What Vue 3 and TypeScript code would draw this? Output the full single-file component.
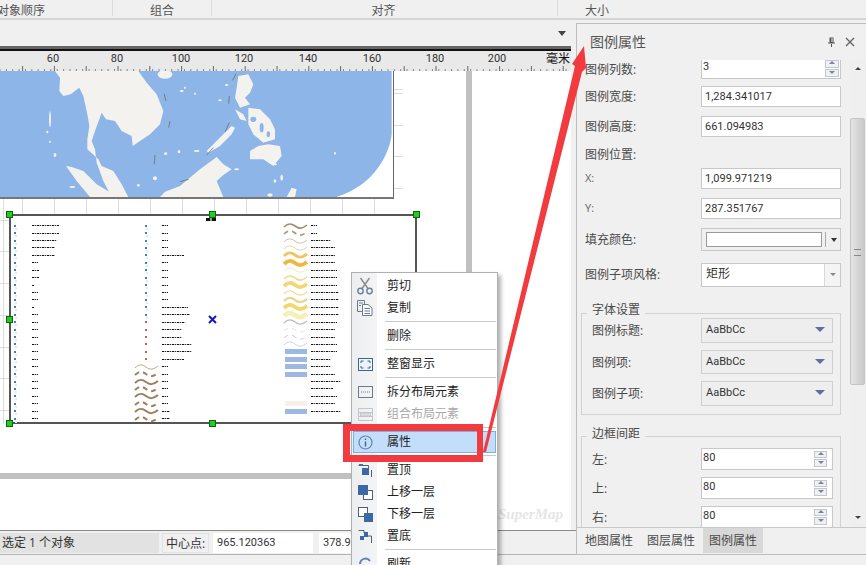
<script setup lang="ts">
type Sym = { kind: 'dot' | 'red' | 'wave' | 'dash' | 'rect' | 'none'; color?: string; w?: number };
type LegendRow = { sym: Sym; label: number };

const rulerLabels = [
  { text: '60', x: 53 },
  { text: '80', x: 117 },
  { text: '100', x: 181 },
  { text: '120', x: 244 },
  { text: '140', x: 308 },
  { text: '160', x: 372 },
  { text: '180', x: 435 },
  { text: '200', x: 497 },
];
const majorTicks = Array.from({ length: 18 }, (_, i) => 22.6 + i * 31.8);
const minorTicks = Array.from({ length: 90 }, (_, i) => i * 6.36);

const col1Widths = [27, 27, 25, 23, 23, 6, 7, 7, 2, 6, 6, 2, 6, 6, 6, 6, 6, 6, 6, 6, 6, 6, 6, 6, 6, 6, 6];
const col2Widths = [6, 6, 6, 6, 22, 6, 6, 6, 6, 6, 6, 26, 28, 23, 20, 20, 30, 30, 22, 6, 6, 6, 6, 6, 6, 8, 8];
const col3Widths = [6, 6, 20, 24, 24, 24, 26, 26, 26, 28, 28, 28, 28, 26, 24, 24, 26, 26, 20, 20, 24, 30, 22, 26, 24, 30];

const col3Syms: Sym[] = [
  { kind: 'wave', color: '#a08a6a', w: 1.6 },
  { kind: 'dash', color: '#a8977f', w: 1.6 },
  { kind: 'wave', color: '#bdb5a0', w: 0.9 },
  { kind: 'wave', color: '#e2cf9d', w: 0.9 },
  { kind: 'wave', color: '#efc564', w: 3 },
  { kind: 'wave', color: '#f0b840', w: 4 },
  { kind: 'wave', color: '#f6e7bd', w: 1 },
  { kind: 'wave', color: '#f2d98c', w: 1.6 },
  { kind: 'wave', color: '#f3d676', w: 4 },
  { kind: 'wave', color: '#efdc99', w: 1.2 },
  { kind: 'wave', color: '#edd48e', w: 2.4 },
  { kind: 'wave', color: '#f2d66e', w: 4 },
  { kind: 'wave', color: '#f5efb8', w: 5 },
  { kind: 'wave', color: '#bdbdbd', w: 1.4 },
  { kind: 'dash', color: '#e2e2e2', w: 1 },
  { kind: 'dash', color: '#cdcdcd', w: 1 },
  { kind: 'wave', color: '#c5d6e8', w: 1 },
  { kind: 'rect', color: '#9db8e2' },
  { kind: 'rect', color: '#9db8e2' },
  { kind: 'rect', color: '#9db8e2' },
  { kind: 'rect', color: '#9db8e2' },
  { kind: 'none' },
  { kind: 'none' },
  { kind: 'none' },
  { kind: 'rect', color: '#f6efea' },
  { kind: 'rect', color: '#9db8e2' },
];

const col1: LegendRow[] = col1Widths.map((label) => ({ sym: { kind: 'dot' }, label }));
const col2: LegendRow[] = col2Widths.map((label, i) => {
  if (i < 13) return { sym: { kind: 'dot' }, label };
  if (i < 19) return { sym: { kind: 'red' }, label };
  const thin = i === 19;
  return { sym: { kind: i % 2 === 0 ? 'dash' : 'wave', color: thin ? '#b9a88f' : '#9c7f5c', w: thin ? 1 : 2 }, label };
});
const col3: LegendRow[] = col3Widths.map((label, i) => ({ sym: col3Syms[i], label }));
const columns = [
  { name: 'col-a', rows: col1 },
  { name: 'col-b', rows: col2 },
  { name: 'col-c', rows: col3 },
];

const handles = [
  { x: 0, y: 0 }, { x: 203, y: 0 }, { x: 407, y: 0 },
  { x: 0, y: 105 }, { x: 407, y: 105 },
  { x: 0, y: 209 }, { x: 203, y: 209 }, { x: 407, y: 209 },
];

const islands = [
  [150, 145, 3, 24], [142, 183, 3, 4], [165, 252, 4, 6], [150, 212, 3, 3], [217, 348, 9, 3],
  [465, 322, 6, 6], [415, 343, 4, 4], [537, 242, 4, 5], [497, 248, 5, 4], [590, 240, 9, 3],
  [545, 60, 6, 3], [555, 50, 3, 3], [585, 68, 3, 3], [680, 42, 5, 3], [660, 88, 5, 3],
  [825, 280, 6, 3], [710, 295, 7, 3], [845, 320, 4, 9], [825, 330, 4, 5], [810, 372, 8, 5], [1005, 247, 3, 4],
];

const fontRows = ['图例标题:', '图例项:', '图例子项:'];
const marginRows = ['左:', '上:', '右:'];
</script>

<template>
  <div class="app">
    <header class="ribbon">
      <div class="ribbon-cell first">对象顺序</div>
      <div class="ribbon-cell second">组合</div>
      <div class="ribbon-cell third">对齐</div>
      <div class="ribbon-cell fourth">大小</div>
    </header>

    <div class="body">
      <section class="workspace">
        <div class="subbar"><span class="sub-arrow"></span></div>
        <div class="heavy-line"></div>
        <div class="ruler">
          <svg class="ruler-ticks" width="571" height="20">
            <line v-for="x in minorTicks" :key="x" :x1="x" :x2="x" y1="18" y2="20" stroke="#888" />
            <line v-for="x in majorTicks" :key="'m' + x" :x1="x" :x2="x" y1="15" y2="20" stroke="#666" />
          </svg>
          <span v-for="l in rulerLabels" :key="l.text" class="ruler-num" :style="{ left: l.x + 'px' }">{{ l.text }}</span>
          <span class="ruler-unit">毫米</span>
        </div>

        <div class="canvas">
          <div class="grid"></div>
          <div class="page-v"></div>
          <div class="page-h"></div>

          <svg class="map" viewBox="0 0 1179 378" preserveAspectRatio="none">
            <path d="M0 0H1175V190C1170 240 1130 340 1010 378H0Z" fill="#8db5e8" />
            <g fill="#f3f2ef">
              <path d="M165 0L180 20 178 60 190 75 212 70 238 50 250 75 262 130 268 165 262 205 262 235 295 265 305 285 340 300 365 340 385 378H335L310 330 290 275 285 235 275 210 285 180 305 125 318 145 345 150 365 180 395 195 398 225 420 210 450 190 480 160 490 120 470 70 440 35 415 0Z" />
              <ellipse cx="495" cy="10" rx="22" ry="13" />
              <path d="M198 285L215 288 250 300 290 340 340 370 350 378H270L230 330Z" />
              <path d="M480 378L495 362 540 345 600 295 650 258 670 280 695 295 670 312 650 330 670 378Z" />
              <path d="M620 240L670 190 695 165 705 170 695 190 660 225 625 245Z" />
              <path d="M715 15L745 10 760 40 750 65 735 80 750 100 720 110 705 80 710 50Z" />
              <path d="M705 115L730 130 740 150 720 145Z" />
              <path d="M745 110L780 115 810 145 825 175 825 205 790 215 760 190 745 160Z" />
              <path d="M805 220L840 225 845 255 820 285 790 265 750 265 750 240 775 225Z" />
              <path d="M860 378L875 350 890 355 885 378Z" />
              <ellipse v-for="(s, i) in islands" :key="i" :cx="s[0]" :cy="s[1]" :rx="s[2]" :ry="s[3]" />
            </g>
            <g fill="#8db5e8">
              <ellipse cx="760" cy="145" rx="9" ry="8" />
              <ellipse cx="785" cy="170" rx="6" ry="14" />
              <ellipse cx="805" cy="190" rx="5" ry="9" />
              <ellipse cx="770" cy="205" rx="6" ry="4" />
            </g>
            <g stroke="#6f6a6a" stroke-width="3" fill="none" opacity="0.75">
              <path d="M492 68L498 90" /><path d="M510 150L506 170" /><path d="M688 75L686 98" />
              <path d="M688 155L676 182" /><path d="M465 252L463 280" /><path d="M540 332L566 325" />
              <path d="M708 8L698 28" /><path d="M640 230L620 252" />
            </g>
          </svg>

          <div class="legend">
            <div v-for="c in columns" :key="c.name" class="legend-col" :class="c.name">
              <div v-for="(r, i) in c.rows" :key="i" class="legend-row">
                <span class="sym">
                  <i v-if="r.sym.kind === 'dot'" class="sym-dot"></i>
                  <i v-else-if="r.sym.kind === 'red'" class="sym-red"></i>
                  <i v-else-if="r.sym.kind === 'rect'" class="sym-rect" :style="{ background: r.sym.color }"></i>
                  <svg v-else-if="r.sym.kind === 'wave' || r.sym.kind === 'dash'" class="sym-wave" viewBox="0 0 23 8">
                    <path
                      d="M0 5C4 1 7 1 11 4S18 7 23 3"
                      fill="none"
                      :stroke="r.sym.color"
                      :stroke-width="r.sym.w"
                      :stroke-dasharray="r.sym.kind === 'dash' ? '5 4' : undefined"
                    />
                  </svg>
                </span>
                <span class="dash" :style="{ width: r.label + 'px' }"></span>
              </div>
            </div>
            <span class="legend-title"></span>
            <svg class="center-mark" width="9" height="9" viewBox="0 0 9 9">
              <path d="M1 1L8 8M8 1L1 8" stroke="#1616c4" stroke-width="2" />
            </svg>
            <span v-for="(h, i) in handles" :key="i" class="handle" :style="{ left: h.x + 'px', top: h.y + 'px' }"></span>
          </div>

          <span class="watermark">SuperMap</span>
        </div>

        <footer class="status">
          <span class="status-main">选定 1 个对象</span>
          <span class="status-label">中心点:</span>
          <span class="status-field wide">965.120363</span>
          <span class="status-field">378.93</span>
        </footer>
      </section>

      <aside class="panel">
        <div class="panel-head">
          <span class="panel-title">图例属性</span>
          <svg class="pin" width="9" height="10" viewBox="0 0 9 10">
            <path d="M2.5 0.5H6.5V5.5H8V6.5H1V5.5H2.5ZM4 7H5V10H4Z" fill="#555" />
            <path d="M5 1V5" stroke="#eee" />
          </svg>
          <svg class="close" width="10" height="10" viewBox="0 0 10 10">
            <path d="M1 1L9 9M9 1L1 9" stroke="#666" stroke-width="1.4" />
          </svg>
        </div>

        <div class="panel-body">
          <div class="form">
            <div class="row first-row">
              <label>图例列数:</label>
              <div class="input spin-input">3<span class="spin"><i class="up"></i><i class="down"></i></span></div>
            </div>
            <div class="row gap7"><label>图例宽度:</label><div class="input">1,284.341017</div></div>
            <div class="row"><label>图例高度:</label><div class="input">661.094983</div></div>
            <div class="row text-row"><label>图例位置:</label></div>
            <div class="row gap4"><label class="dim">X:</label><div class="input">1,099.971219</div></div>
            <div class="row"><label class="dim">Y:</label><div class="input">287.351767</div></div>
            <div class="row tall">
              <label>填充颜色:</label>
              <div class="input color-input"><span class="swatch"></span><span class="color-drop"></span></div>
            </div>
            <div class="row gap12 combo-row">
              <label>图例子项风格:</label>
              <div class="input select">矩形<span class="select-btn"></span></div>
            </div>

            <fieldset class="group">
              <legend>字体设置</legend>
              <div v-for="f in fontRows" :key="f" class="group-row font-row">
                <label>{{ f }}</label>
                <div class="font-box">AaBbCc<span class="font-arrow"></span></div>
              </div>
            </fieldset>

            <fieldset class="group margins">
              <legend>边框间距</legend>
              <div v-for="m in marginRows" :key="m" class="group-row margin-row">
                <label>{{ m }}</label>
                <div class="input spin-input narrow">80<span class="spin big"><i class="up"></i><i class="down"></i></span></div>
              </div>
            </fieldset>
          </div>

          <div class="scrollbar">
            <span class="sb-up"></span>
            <div class="sb-thumb"><span class="grip"></span></div>
            <span class="sb-down"></span>
          </div>
        </div>

        <nav class="tabs">
          <span class="tab">地图属性</span>
          <span class="tab">图层属性</span>
          <span class="tab active">图例属性</span>
        </nav>
      </aside>
    </div>

    <!-- context menu -->
    <div class="menu">
      <div class="menu-item">
        <span class="mi">
          <svg width="16" height="18" viewBox="0 0 16 18" fill="none" stroke="#6c7f96" stroke-width="1.4">
            <circle cx="3.5" cy="14" r="2.7" /><circle cx="12.5" cy="14" r="2.7" />
            <path d="M5 11.5L12.5 1M11 11.5L3.5 1" stroke="#8a8a8a" />
          </svg>
        </span>剪切
      </div>
      <div class="menu-item">
        <span class="mi">
          <svg width="16" height="16" viewBox="0 0 16 16" fill="#fff" stroke="#6b7c90">
            <path d="M0.5 0.5H7.5V11.5H0.5Z" fill="none" />
            <path d="M5.5 4.5H11L15 8V15.5H5.5Z" />
            <path d="M2 3H6M2 5.5H4M7.5 8.5H13M7.5 11H13M7.5 13.5H13" />
          </svg>
        </span>复制
      </div>
      <div class="menu-sep"></div>
      <div class="menu-item"><span class="mi"></span>删除</div>
      <div class="menu-sep"></div>
      <div class="menu-item">
        <span class="mi">
          <svg width="15" height="13" viewBox="0 0 15 13" fill="none">
            <rect x="0.5" y="0.5" width="14" height="12" fill="#eef3fa" stroke="#44648c" />
            <path d="M3 5V3H5.5M9.5 3H12V5M12 8V10H9.5M5.5 10H3V8" stroke="#44648c" />
          </svg>
        </span>整窗显示
      </div>
      <div class="menu-sep"></div>
      <div class="menu-item">
        <span class="mi">
          <svg width="15" height="12" viewBox="0 0 15 12" fill="none">
            <rect x="0.5" y="0.5" width="14" height="11" stroke="#6c7a8a" />
            <path d="M3 6H12" stroke="#6c7a8a" stroke-dasharray="1 1" />
          </svg>
        </span>拆分布局元素
      </div>
      <div class="menu-item disabled">
        <span class="mi">
          <svg width="15" height="13" viewBox="0 0 15 13" fill="none" stroke="#c2c6cb">
            <rect x="0.5" y="0.5" width="14" height="12" />
            <path d="M0.5 4.5H14.5M0.5 8.5H14.5" />
            <rect x="2.5" y="5" width="10" height="3" fill="#dcdfe3" />
          </svg>
        </span>组合布局元素
      </div>
      <div class="menu-sep"></div>
      <div class="menu-item selected">
        <span class="mi">
          <svg width="15" height="15" viewBox="0 0 15 15" fill="none">
            <circle cx="7.5" cy="7.5" r="6.5" stroke="#5d85b5" stroke-width="1.2" />
            <path d="M7.5 3.5V5M7.5 6.5V11.5" stroke="#44648c" stroke-width="1.4" />
          </svg>
        </span>属性
      </div>
      <div class="menu-sep"></div>
      <div class="menu-item">
        <span class="mi">
          <svg width="15" height="15" viewBox="0 0 15 15" fill="none">
            <path d="M0.5 2.5H10.5V7M13.5 7V14" stroke="#55606c" />
            <path d="M1 1H5V3H1Z" fill="#3f6ea8" />
            <rect x="4" y="5" width="7" height="7" fill="#3a69a6" />
          </svg>
        </span>置顶
      </div>
      <div class="menu-item">
        <span class="mi">
          <svg width="15" height="15" viewBox="0 0 15 15" fill="none">
            <rect x="5.5" y="5.5" width="9" height="9" stroke="#55606c" fill="#fff" />
            <rect x="0" y="0" width="10" height="10" fill="#3a69a6" />
          </svg>
        </span>上移一层
      </div>
      <div class="menu-item">
        <span class="mi">
          <svg width="15" height="15" viewBox="0 0 15 15" fill="none">
            <rect x="0.5" y="0.5" width="9" height="9" stroke="#55606c" fill="#fff" />
            <rect x="6" y="6" width="9" height="9" fill="#3a69a6" />
          </svg>
        </span>下移一层
      </div>
      <div class="menu-item">
        <span class="mi">
          <svg width="15" height="15" viewBox="0 0 15 15" fill="none">
            <path d="M0.5 1.5H6V4M10 7H13.5V14" stroke="#55606c" />
            <path d="M6 3H10V8H6ZM2 7H6V11H2Z" fill="#3a69a6" />
          </svg>
        </span>置底
      </div>
      <div class="menu-sep"></div>
      <div class="menu-item">
        <span class="mi">
          <svg width="15" height="15" viewBox="0 0 15 15" fill="none" stroke="#5d85b5" stroke-width="2">
            <path d="M2 7A5.5 5.5 0 0 1 12 4M13 8A5.5 5.5 0 0 1 3 11" />
          </svg>
        </span>刷新
      </div>
    </div>

    <!-- red annotation -->
    <div class="red-box"></div>
    <svg class="red-arrow" width="866" height="565" viewBox="0 0 866 565">
      <path d="M483 452L575 66 572 64 584 46 586 68 582 72 486 452Z" fill="#f23b3f" />
    </svg>
  </div>
</template>

<style>
html,
body {
  margin: 0;
  background: #f0f0f0;
}
</style>

<style scoped>
.app {
  position: relative;
  width: 866px;
  height: 565px;
  overflow: hidden;
  display: flex;
  flex-direction: column;
  background: #f0f0f0;
  font-family: "Open Sans", "Noto Sans CJK SC", sans-serif;
  font-size: 12px;
  color: #333;
}

/* ribbon */
.ribbon {
  flex: none;
  height: 20px;
  display: flex;
  box-sizing: border-box;
  border-bottom: 2px solid #d4d4d4;
  color: #555;
  line-height: 21px;
}
.ribbon-cell {
  height: 16px;
  border-right: 1px solid #dcdcdc;
  text-align: center;
  white-space: nowrap;
  box-sizing: border-box;
}
.ribbon-cell.first {
  width: 113px;
  text-align: left;
  text-indent: -3px;
}
.ribbon-cell.second { width: 99px; }
.ribbon-cell.third { width: 346px; padding-right: 2px; }
.ribbon-cell.fourth { width: 78px; border-right: 0; }

.body {
  flex: none;
  height: 535px;
  display: flex;
}

/* left side */
.workspace {
  width: 576px;
  flex: none;
  display: flex;
  flex-direction: column;
}
.subbar {
  flex: none;
  height: 26px;
  margin-right: 5px;
  position: relative;
}
.sub-arrow {
  position: absolute;
  right: 5px;
  top: 11px;
  border: 4px solid transparent;
  border-top: 5px solid #444;
  border-bottom: 0;
}
.heavy-line {
  flex: none;
  height: 5px;
  margin-right: 5px;
  box-sizing: border-box;
  background: #111;
  border-top: 3px solid #666;
}
.ruler {
  flex: none;
  position: relative;
  height: 20px;
  margin-right: 5px;
  background: #e9e9e9;
  color: #333;
  line-height: 16px;
  overflow: hidden;
}
.ruler-ticks {
  position: absolute;
  left: 0;
  top: 0;
}
.ruler-num {
  position: absolute;
  top: 0;
  transform: translateX(-50%);
  font: 11px/16px Roboto, sans-serif;
}
.ruler-unit {
  position: absolute;
  left: 546px;
  top: 0;
  color: #111;
}
.canvas {
  flex: none;
  position: relative;
  height: 459px;
  margin-right: 5px;
  background: #fff;
  overflow: hidden;
}
.grid {
  position: absolute;
  left: 0;
  top: 0;
  width: 403px;
  height: 353px;
  background-image:
    repeating-linear-gradient(90deg, #dcdcdc 0 1px, transparent 1px 32px),
    repeating-linear-gradient(180deg, #dcdcdc 0 1px, transparent 1px 31.7px);
  background-position: 22px 0, 0 22px;
  background-size: 403px 353px;
}
.page-v {
  position: absolute;
  left: 466px;
  top: 0;
  width: 6px;
  height: 408px;
  background: #c0c0c0;
}
.page-h {
  position: absolute;
  left: 0;
  top: 402px;
  width: 472px;
  height: 6px;
  background: #c0c0c0;
}
.map {
  position: absolute;
  left: 0;
  top: 0;
  width: 393px;
  height: 126px;
  background: #fff;
  border-right: 1px solid #666;
  border-bottom: 2px solid #777;
}

/* legend */
.legend {
  position: absolute;
  left: 9px;
  top: 143px;
  width: 408px;
  height: 210px;
  box-sizing: border-box;
  border: 2px solid #555;
  background: #fff;
  display: flex;
}
.legend-col {
  padding-top: 6px;
  display: flex;
  flex-direction: column;
}
.col-a { width: 124px; }
.col-b { width: 149px; }
.legend-row {
  height: 7.43px;
  display: flex;
  align-items: center;
  flex: none;
}
.sym {
  width: 23px;
  height: 7.43px;
  margin-right: 4px;
  flex: none;
  display: flex;
  align-items: center;
  justify-content: center;
}
.col-a .sym {
  width: 8px;
  margin-right: 13px;
}
.sym-dot {
  width: 2px;
  height: 2px;
  background: #3b82b5;
  box-shadow: 1px 3px 0 #d8eef7;
  margin-right: 1px;
}
.sym-red {
  width: 2px;
  height: 2px;
  background: #c0605c;
  margin-right: 1px;
}
.sym-rect {
  width: 22px;
  height: 5px;
}
.sym-wave {
  width: 23px;
  height: 8px;
  overflow: visible;
}
.dash {
  height: 1px;
  background: repeating-linear-gradient(90deg, #111 0 2px, #aaa 2px 3px, #333 3px 4px, #ccc 4px 5px);
}
.legend-title {
  position: absolute;
  left: 195px;
  top: 2px;
  width: 10px;
  height: 3px;
  background: repeating-linear-gradient(90deg, #111 0 4px, #999 4px 6px);
}
.center-mark {
  position: absolute;
  left: 197px;
  top: 99px;
}
.handle {
  position: absolute;
  width: 7px;
  height: 7px;
  margin: -5px 0 0 -5px;
  background: #22cc22;
  border: 1px solid #0a6a0a;
  box-sizing: border-box;
}
.watermark {
  position: absolute;
  left: 498px;
  top: 435px;
  font: italic bold 15px "Liberation Serif", serif;
  color: #e6e6e6;
}

/* status */
.status {
  flex: none;
  height: 25px;
  box-sizing: border-box;
  border-top: 1px solid #8a8a8a;
  border-bottom: 1px solid #b4b4b4;
  display: flex;
  align-items: center;
  padding: 1px 0;
  color: #333;
}
.status-main {
  width: 159px;
  height: 20px;
  line-height: 20px;
  padding-left: 2px;
  box-sizing: border-box;
  background: #e2e2e2;
}
.status-label {
  margin-left: 3px;
  width: 47px;
  height: 20px;
  line-height: 20px;
  text-align: center;
  border: 1px solid #e2e2e2;
  box-sizing: border-box;
}
.status-field {
  margin-left: 4px;
  width: 130px;
  height: 20px;
  line-height: 20px;
  padding-left: 4px;
  box-sizing: border-box;
  background: #fff;
  font-family: Roboto, sans-serif;
  font-size: 11px;
}
.status-field.wide {
  width: 100px;
  margin-right: 2px;
}

/* panel */
.panel {
  flex: none;
  width: 290px;
  height: 532px;
  margin-top: 3px;
  box-sizing: border-box;
  border-top: 1px solid #bdbdbd;
  border-left: 1px solid #bdbdbd;
  border-bottom: 1px solid #bdbdbd;
  display: flex;
  flex-direction: column;
  color: #4a4a4a;
}
.panel-head {
  flex: none;
  height: 36px;
  position: relative;
}
.panel-title {
  position: absolute;
  left: 13px;
  top: 8px;
  font-size: 14px;
  line-height: 20px;
  color: #555;
}
.pin {
  position: absolute;
  left: 250px;
  top: 13px;
}
.close {
  position: absolute;
  left: 268px;
  top: 13px;
}
.panel-body {
  flex: none;
  height: 467px;
  display: flex;
  overflow: hidden;
}
.form {
  flex: none;
  width: 273px;
  box-sizing: border-box;
  padding-left: 8px;
}
.row {
  display: flex;
  align-items: center;
  height: 21px;
  margin-top: 9px;
}
.row > label {
  width: 116px;
  flex: none;
  position: relative;
  top: -1px;
}
.first-row {
  height: 19px;
  margin-top: 0;
}
.gap7 { margin-top: 7px; }
.gap4 { margin-top: 4px; }
.gap12 { margin-top: 12px; }
.tall { height: 23px; }
.text-row { height: 18px; }
.combo-row { height: 24px; }
.dim { color: #666; font-size: 11px; }
.input {
  width: 140px;
  height: 100%;
  box-sizing: border-box;
  border: 1px solid #c8c8c8;
  background: #fff;
  line-height: 19px;
  padding-left: 3px;
  color: #333;
  position: relative;
  font-family: Roboto, sans-serif;
  font-size: 11px;
}
.spin-input {
  padding-left: 1px;
  border-top: 0;
  line-height: 14px;
}
.spin {
  position: absolute;
  right: 1px;
  top: 0;
  bottom: 1px;
  width: 14px;
  display: flex;
  flex-direction: column;
  gap: 1px;
}
.spin i {
  flex: 1;
  background: #eef0f3;
  border: 1px solid #c4c8ce;
  position: relative;
}
.spin i::after {
  content: "";
  position: absolute;
  left: 3px;
  border: 3px solid transparent;
}
.spin .up::after {
  top: 0;
  border-top: 0;
  border-bottom: 3px solid #78849a;
}
.spin .down::after {
  top: 1px;
  border-bottom: 0;
  border-top: 3px solid #78849a;
}
.color-input {
  background: #f0f0f0;
  padding: 3px 0 3px 4px;
  display: flex;
  align-items: center;
}
.swatch {
  width: 118px;
  height: 15px;
  background: #fff;
  border: 1px solid #9a9a9a;
  box-sizing: border-box;
}
.color-drop {
  margin-left: 3px;
  height: 15px;
  width: 14px;
  border-left: 1px solid #aaa;
  position: relative;
}
.color-drop::after {
  content: "";
  position: absolute;
  left: 5px;
  top: 6px;
  border: 3px solid transparent;
  border-top: 4px solid #333;
  border-bottom: 0;
}
.select {
  padding-left: 4px;
  color: #333;
  font-size: 12px;
  font-family: "Noto Sans CJK SC", sans-serif;
  line-height: 17px;
}
.select-btn {
  position: absolute;
  right: 0;
  top: 0;
  bottom: 0;
  width: 15px;
  border-left: 1px solid #d8d8d8;
  background: #f4f4f4;
}
.select-btn::after {
  content: "";
  position: absolute;
  left: 5px;
  top: 9px;
  border: 3px solid transparent;
  border-top: 3px solid #888;
  border-bottom: 0;
}

/* groups */
.group {
  margin: 18px 0 0 -4px;
  padding: 0 7px 8px 10px;
  width: 260px;
  box-sizing: border-box;
  border: 1px solid #d2d2d2;
  min-inline-size: 0;
}
.group legend {
  padding: 0 5px;
  margin-left: -5px;
  line-height: 16px;
  font-size: 12px;
  color: #4a4a4a;
  position: relative;
  top: -3px;
}
.group-row {
  display: flex;
  align-items: center;
}
.group-row > label {
  width: 109px;
  flex: none;
}
.font-row {
  height: 24.5px;
  margin-top: 7px;
}
.font-row:first-of-type {
  margin-top: -3px;
}
.font-box {
  width: 132px;
  height: 100%;
  box-sizing: border-box;
  border: 1px solid #d0d0d0;
  background: #eee;
  line-height: 22px;
  padding-left: 4px;
  color: #333;
  position: relative;
  font-family: Roboto, sans-serif;
  font-size: 11px;
}
.font-arrow {
  position: absolute;
  right: 7px;
  top: 8px;
  border: 5px solid transparent;
  border-top: 5px solid #5b7198;
  border-bottom: 0;
}
.margins {
  margin-top: 14px;
  padding-bottom: 0;
}
.margin-row {
  height: 22px;
  margin-top: 7px;
}
.margin-row:first-of-type {
  margin-top: 3px;
}
.narrow {
  width: 132px;
  border-top: 1px solid #c8c8c8;
  line-height: 18px;
}
.spin.big {
  top: 2px;
  bottom: 2px;
  right: 5px;
  width: 13px;
}

/* scrollbar */
.scrollbar {
  flex: none;
  width: 16px;
  position: relative;
  background: #efefef;
}
.sb-up,
.sb-down {
  position: absolute;
  left: 5px;
  border: 3px solid transparent;
}
.sb-up {
  top: 7px;
  border-top: 0;
  border-bottom: 3px solid #444;
}
.sb-down {
  top: 456px;
  border-bottom: 0;
  border-top: 3px solid #444;
}
.sb-thumb {
  position: absolute;
  left: 0;
  top: 58px;
  width: 15px;
  height: 267px;
  box-sizing: border-box;
  border: 1px solid #c4c4c4;
  border-radius: 2px;
  background: linear-gradient(90deg, #e4e4e4, #c9c9c9);
}
.grip {
  position: absolute;
  left: 3px;
  top: 130px;
  width: 7px;
  height: 5px;
  border-top: 1px solid #888;
  border-bottom: 1px solid #888;
}

/* tabs */
.tabs {
  flex: none;
  height: 28px;
  box-sizing: border-box;
  border-top: 1px solid #c8c8c8;
  display: flex;
  padding-left: 2px;
}
.tab {
  width: 60px;
  height: 25px;
  line-height: 26px;
  text-align: center;
  margin-right: 2px;
  color: #4a4a4a;
}
.tab.active {
  background: #d8d8d8;
}

/* context menu */
.menu {
  position: absolute;
  left: 351px;
  top: 272px;
  width: 147px;
  box-sizing: border-box;
  padding: 2px 0 0 1px;
  background: linear-gradient(90deg, #eceef0 0, #f4f4f5 25px, #fff 25px);
  border: 1px solid #b0b0b0;
  box-shadow: 3px 3px 4px rgba(0, 0, 0, 0.3);
  color: #222;
}
.menu-item {
  height: 22px;
  line-height: 22px;
  display: flex;
  align-items: center;
  margin: 0 1px 0 0;
  box-sizing: border-box;
}
.mi {
  width: 34px;
  flex: none;
  display: flex;
  justify-content: center;
  padding-right: 10px;
  box-sizing: border-box;
}
.menu-item.disabled {
  color: #a8a8a8;
}
.menu-item.selected {
  background: #c3defa;
  outline: 1px solid #7ab0e4;
  outline-offset: -1px;
}
.menu-sep {
  height: 1px;
  margin: 2px 1px 3px 32px;
  background: #c8c8c8;
}

/* annotation */
.red-box {
  position: absolute;
  left: 343px;
  top: 424px;
  width: 140px;
  height: 38px;
  box-sizing: border-box;
  border: 7px solid #f23b3f;
  border-right-width: 6px;
}
.red-arrow {
  position: absolute;
  left: 0;
  top: 0;
  pointer-events: none;
}
</style>
